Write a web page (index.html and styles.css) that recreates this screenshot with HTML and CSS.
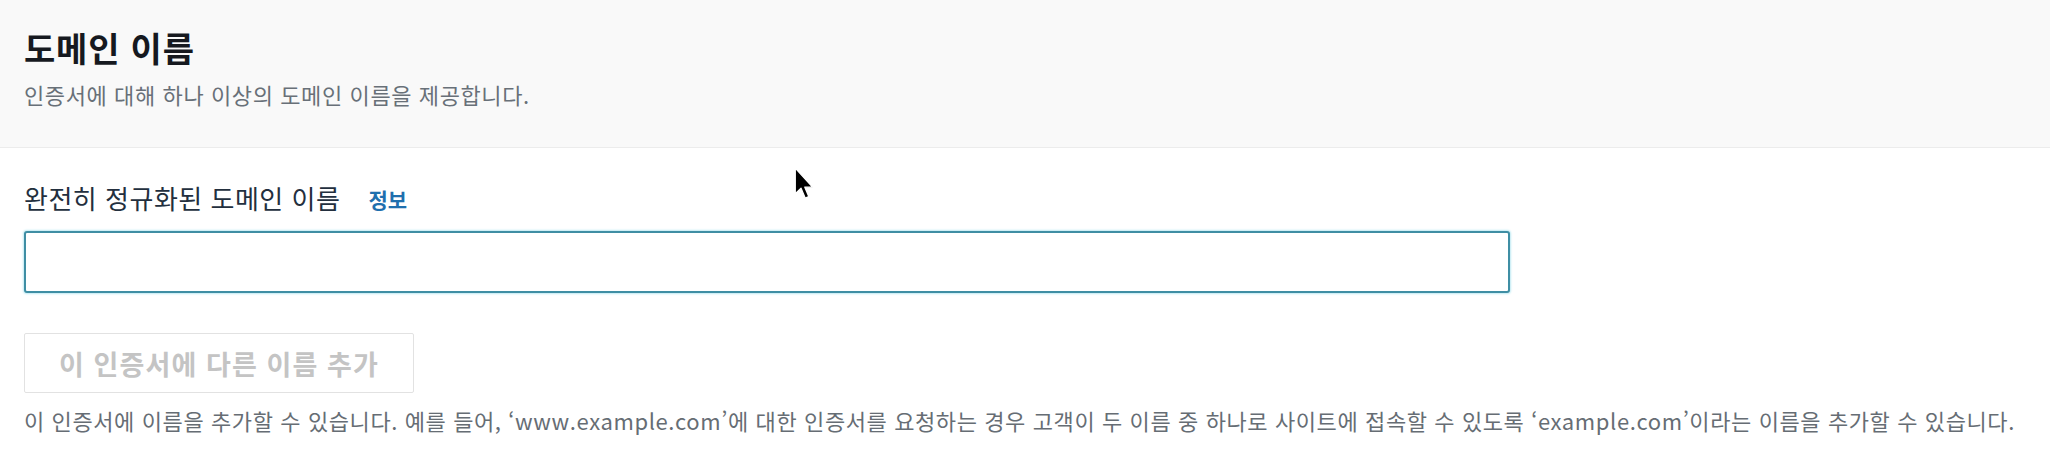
FILE: index.html
```html
<!DOCTYPE html>
<html lang="ko">
<head>
<meta charset="utf-8">
<title>도메인 이름</title>
<link rel="stylesheet" href="styles.css">
</head>
<body>
<div class="panel">
  <div class="panel-header">
    <h2 class="title">도메인 이름</h2>
    <p class="subtitle">인증서에 대해 하나 이상의 도메인 이름을 제공합니다.</p>
  </div>
  <div class="panel-body">
    <div class="field-label">
      <span class="label-text">완전히 정규화된 도메인 이름</span>
      <a class="info-link" href="#">정보</a>
    </div>
    <div class="input-wrap">
      <input class="text-input" type="text" aria-label="완전히 정규화된 도메인 이름">
    </div>
    <div class="button-row">
      <button class="btn-disabled" type="button" disabled>이 인증서에 다른 이름 추가</button>
    </div>
    <p class="help">이 인증서에 이름을 추가할 수 있습니다. 예를 들어, ‘www.example.com’에 대한 인증서를 요청하는 경우 고객이 두 이름 중 하나로 사이트에 접속할 수 있도록 ‘example.com’이라는 이름을 추가할 수 있습니다.</p>
  </div>
  <svg class="cursor" width="20" height="33" viewBox="0 0 12 20" aria-hidden="true">
    <path d="M0.7 0.7 L0.7 16.2 L4.2 12.9 L6.7 18.8 L8.9 17.9 L6.5 12.2 L11.2 12.2 Z" fill="#000" stroke="#fff" stroke-width="0.8" stroke-linejoin="round"/>
  </svg>
</div>
</body>
</html>
```

FILE: styles.css
```css
html, body {
  margin: 0;
  padding: 0;
  background: #ffffff;
}

body {
  font-family: "Noto Sans CJK KR", "Noto Sans", "Liberation Sans", sans-serif;
  color: #16191f;
}

.panel {
  position: relative;
  width: 2050px;
  height: 470px;
  overflow: hidden;
}

.panel-header {
  background: #f9f9f9;
  border-bottom: 1px solid #ececec;
  padding: 27px 24px 39px;
}

.title {
  margin: 0;
  font-size: 34px;
  line-height: 42px;
  font-weight: 700;
  letter-spacing: 0.8px;
  color: #16191f;
}

.subtitle {
  margin: 11px 0 0;
  font-size: 22px;
  line-height: 28px;
  letter-spacing: 0.6px;
  color: #687078;
}

.panel-body {
  padding: 33px 24px 0;
}

.field-label {
  display: flex;
  align-items: center;
  gap: 28px;
  height: 34px;
}

.label-text {
  font-size: 26px;
  line-height: 34px;
  letter-spacing: 0.5px;
  color: #232f3e;
}

.info-link {
  font-size: 21px;
  line-height: 34px;
  font-weight: 700;
  color: #1f6fae;
  text-decoration: none;
  padding-top: 2px;
}

.input-wrap {
  margin-top: 16px;
  width: 1486px;
}

.text-input {
  display: block;
  box-sizing: border-box;
  width: 100%;
  height: 62px;
  margin: 0;
  border: 2px solid #3f8ea4;
  border-radius: 3px;
  box-shadow: 0 0 2px 1px #bfeaf3;
  background: #fff;
  outline: none;
}

.button-row {
  margin-top: 40px;
  display: flex;
}

.btn-disabled {
  box-sizing: border-box;
  width: 390px;
  height: 60px;
  padding: 0;
  border: 1px solid #e2e2e2;
  border-radius: 2px;
  background: #ffffff;
  font-family: "Noto Sans CJK KR", "Noto Sans", sans-serif;
  font-size: 27px;
  letter-spacing: 1.1px;
  font-weight: 700;
  color: #c4c4c4;
}

.help {
  margin: 13px 0 0;
  font-size: 22px;
  line-height: 28px;
  letter-spacing: 0.6px;
  color: #666d74;
  white-space: nowrap;
}

.cursor {
  position: absolute;
  left: 794px;
  top: 167px;
}
```
